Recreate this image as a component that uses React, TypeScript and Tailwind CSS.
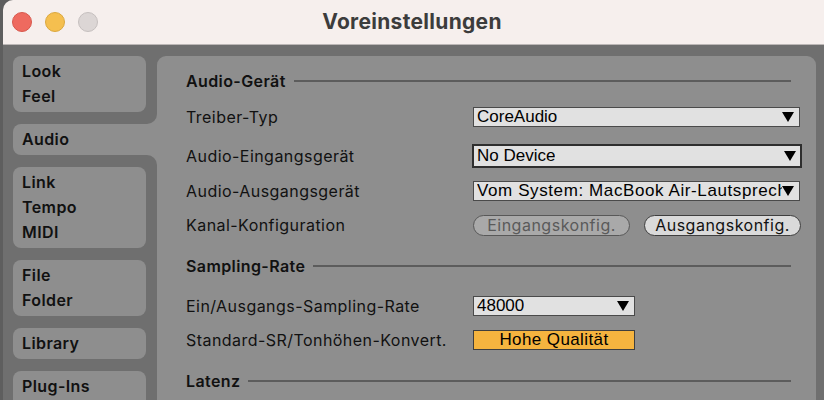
import React from "react";

const ui = { fontFamily: "Inter, 'Noto Sans', sans-serif" };
const sys = { fontFamily: "'Liberation Sans', Arial, sans-serif" };

const Arrow = () => (
	<svg width="12" height="10" viewBox="0 0 12 10" className="shrink-0">
		<polygon points="0,0 12,0 6,10" fill="#000" />
	</svg>
);

const tabs = [
	{ lines: ["Look", "Feel"] },
	{ lines: ["Audio"], active: true },
	{ lines: ["Link", "Tempo", "MIDI"] },
	{ lines: ["File", "Folder"] },
	{ lines: ["Library"] },
	{ lines: ["Plug-Ins", "x"] },
];

const Tab = ({ lines, active }: { lines: string[]; active?: boolean }) => {
	if (active) {
		return (
			<div className="relative -mr-[11px] rounded-l-[8px] bg-[#8e8e8e] pl-[9px] py-[3px]">
				{/* concave corners joining the panel */}
				<div className="absolute right-0 -top-[10px] w-[11px] h-[10px] bg-[#8e8e8e]">
					<div className="w-full h-full bg-[#6f6f6f] rounded-br-[10px]" />
				</div>
				<div className="absolute right-0 top-full w-[11px] h-[12px] bg-[#8e8e8e]">
					<div className="w-full h-full bg-[#6f6f6f] rounded-tr-[10px]" />
				</div>
				{lines.map((l) => (
					<div key={l} className="leading-[25px]">
						{l}
					</div>
				))}
			</div>
		);
	}
	return (
		<div className="rounded-[8px] bg-[#8e8e8e] pl-[9px] py-[3px]">
			{lines.map((l) => (
				<div key={l} className={l === "x" ? "leading-[25px] invisible" : "leading-[25px]"}>
					{l}
				</div>
			))}
		</div>
	);
};

const Heading = ({ title, className }: { title: string; className: string }) => (
	<div className={`flex items-center h-[24px] ${className}`}>
		<span className="font-semibold text-[16px] tracking-[0.4px] text-[#111]">{title}</span>
		<div className="flex-1 h-[2px] bg-[#5c5c5c] ml-[8px] mr-[11px]" />
	</div>
);

const Row = ({
	label,
	className,
	children,
}: {
	label: string;
	className: string;
	children: React.ReactNode;
}) => (
	<div className={`flex items-center h-[24px] ${className}`}>
		<div className="w-[287px] shrink-0 text-[16px] tracking-[0.45px] text-[#111]">{label}</div>
		{children}
	</div>
);

const Select = ({
	value,
	width,
	focused,
	wide,
}: {
	value: string;
	width: string;
	focused?: boolean;
	wide?: boolean;
}) => (
	<div
		className={`flex items-center justify-between bg-[#e1e1e1] text-[17px] text-black overflow-hidden ${width} ${
			focused
				? "h-[24px] border-2 border-[#2e2e2e] pl-[3px] pr-[4px] -ml-[1px]"
				: "h-[20px] border border-[#4a4a4a] pl-[3px] pr-[5px]"
		}`}
		style={sys}
	>
		<span className={`whitespace-nowrap overflow-hidden ${wide ? "tracking-[0.6px]" : ""}`}>{value}</span>
		<Arrow />
	</div>
);

export default function App() {
	return (
		<div className="w-[824px] h-[400px] overflow-hidden bg-[#5e5e5e] pl-[3px]" style={ui}>
			<div className="h-full flex flex-col bg-[#6f6f6f] rounded-tl-[10px] overflow-hidden">
				{/* title bar */}
				<div className="relative h-[45px] shrink-0 flex items-center justify-center bg-[#f6efed] border-b border-[#bcb7b6]">
					<div className="absolute left-[9px] top-[12px] flex gap-[13px]">
						<div className="w-[20px] h-[20px] rounded-full bg-[#ee6a5f] border border-[#d8584d]" />
						<div className="w-[20px] h-[20px] rounded-full bg-[#f5bf4f] border border-[#dba83e]" />
						<div className="w-[20px] h-[20px] rounded-full bg-[#dcd6d5] border border-[#c6c0bf]" />
					</div>
					<span className="text-[21px] font-bold tracking-[0.3px] text-[#3c3c3c] -ml-[3px]">Voreinstellungen</span>
				</div>

				{/* body */}
				<div className="flex flex-1 pt-[11px] pl-[10px] pr-[9px] min-h-0">
					<div className="w-[133px] shrink-0 flex flex-col gap-[12px] text-[16px] tracking-[0.4px] font-semibold text-[#111]">
						{tabs.map((t, i) => (
							<Tab key={i} lines={t.lines} active={t.active} />
						))}
					</div>

					<div className="flex-1 ml-[11px] bg-[#8e8e8e] rounded-t-[9px] pl-[29px] pr-[14px] pt-[13px]">
						<Heading title="Audio-Gerät" className="" />

						<Row label="Treiber-Typ" className="mt-[12px]">
							<Select value="CoreAudio" width="w-[327px]" />
						</Row>
						<Row label="Audio-Eingangsgerät" className="mt-[15px]">
							<Select value="No Device" width="w-[330px]" focused />
						</Row>
						<Row label="Audio-Ausgangsgerät" className="mt-[11px]">
							<Select value="Vom System: MacBook Air-Lautsprecher" width="w-[327px]" wide />
						</Row>
						<Row label="Kanal-Konfiguration" className="mt-[10px]">
							<div className="flex gap-[14px]">
								<div className="w-[157px] h-[21px] flex items-center justify-center rounded-full bg-[#a9a9a9] border border-[#585858] text-[16px] tracking-[0.5px] text-[#5a5a5a]">
									Eingangskonfig.
								</div>
								<div className="w-[157px] h-[21px] flex items-center justify-center rounded-full bg-[#dadada] border border-[#3e3e3e] text-[16px] tracking-[0.5px] text-[#111]">
									Ausgangskonfig.
								</div>
							</div>
						</Row>

						<Heading title="Sampling-Rate" className="mt-[17px]" />

						<Row label="Ein/Ausgangs-Sampling-Rate" className="mt-[16px]">
							<Select value="48000" width="w-[162px]" />
						</Row>
						<Row label="Standard-SR/Tonhöhen-Konvert." className="mt-[10px]">
							<div
								className="w-[162px] h-[20px] flex items-center justify-center bg-[#f5b43f] border border-[#3e3e3e] text-[17px] tracking-[0.4px] text-black"
								style={sys}
							>
								Hohe Qualität
							</div>
						</Row>

						<Heading title="Latenz" className="mt-[17px]" />
					</div>
				</div>
			</div>
		</div>
	);
}
